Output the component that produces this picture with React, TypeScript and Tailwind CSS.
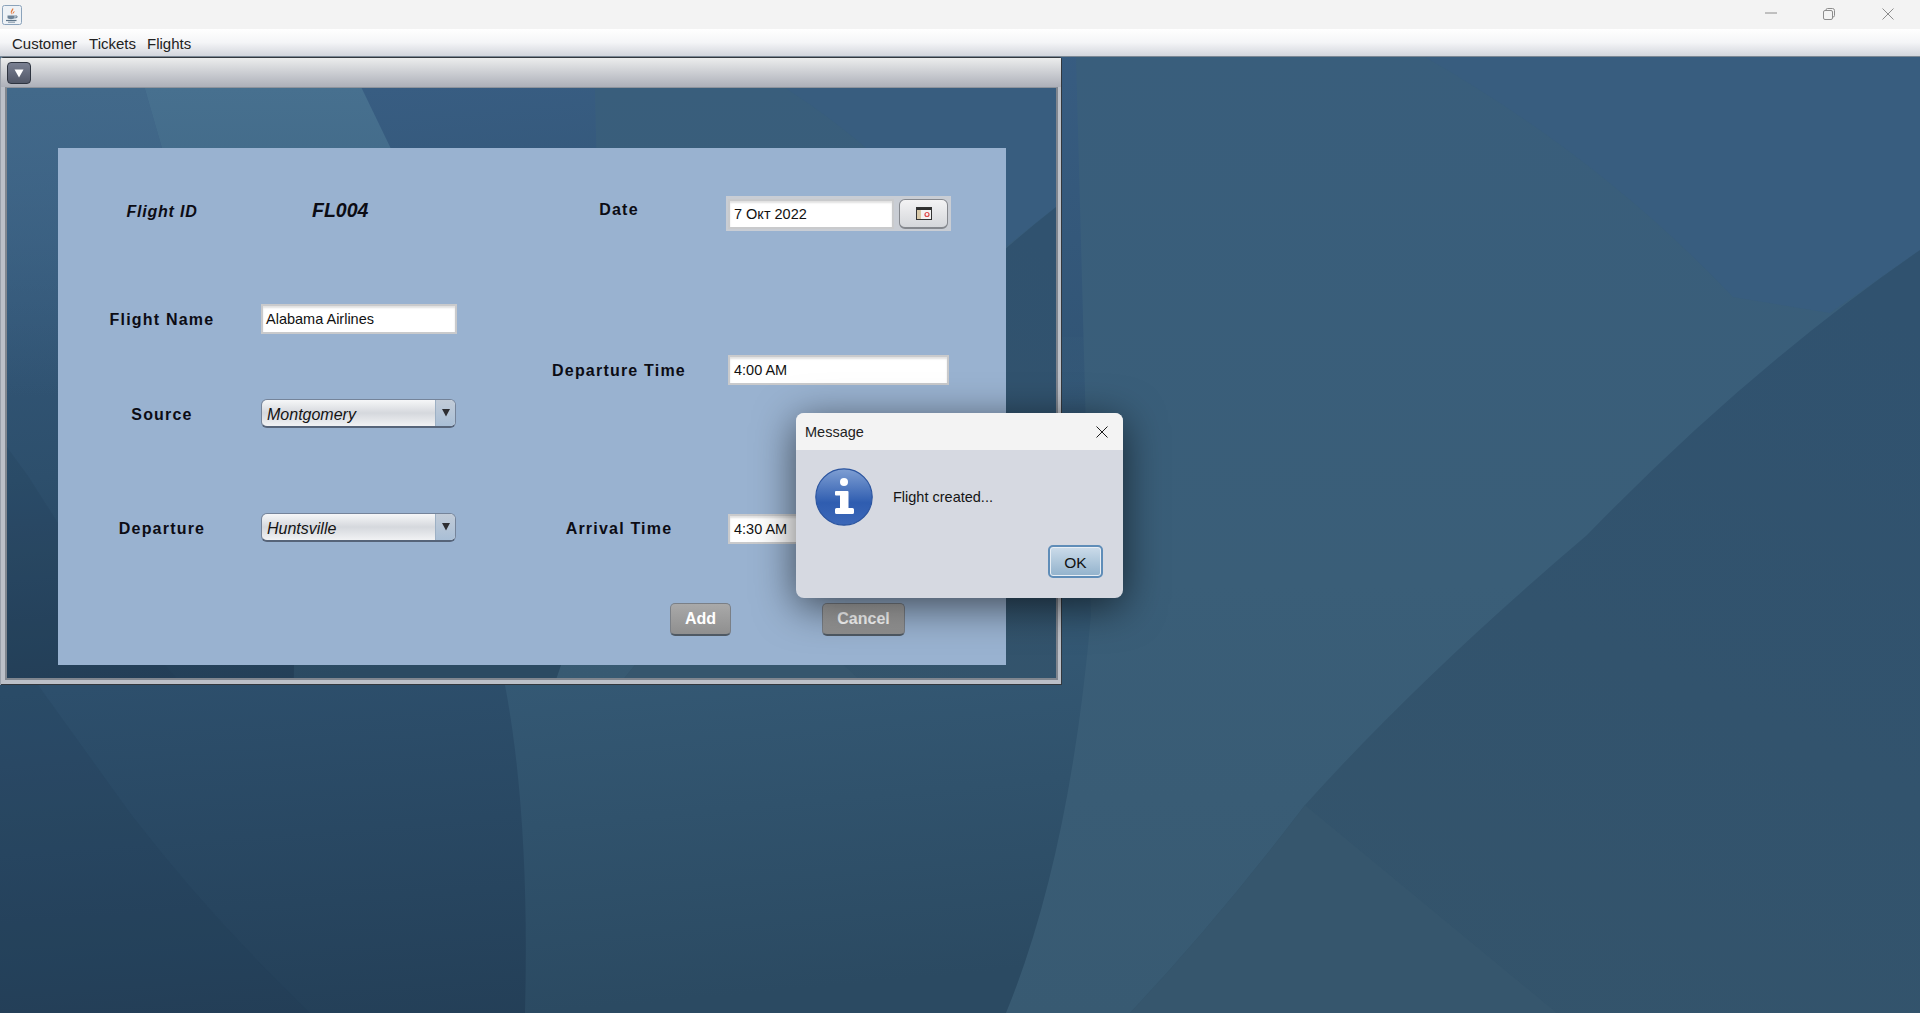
import React from "react";

const Wallpaper: React.FC = () => (
  <svg
    className="absolute inset-0 h-full w-full"
    viewBox="0 0 1920 956"
    preserveAspectRatio="none"
  >
    <defs>
      <linearGradient id="wpBase" x1="0.35" y1="0" x2="0.5" y2="1">
        <stop offset="0" stopColor="#385d82" />
        <stop offset="0.6" stopColor="#2d4f6c" />
        <stop offset="1" stopColor="#233e56" />
      </linearGradient>
      <linearGradient id="wpCenter" x1="0" y1="0" x2="0.1" y2="1">
        <stop offset="0" stopColor="#3a5f7c" stopOpacity="0" />
        <stop offset="0.45" stopColor="#355a76" stopOpacity="1" />
        <stop offset="1" stopColor="#2b4a62" stopOpacity="1" />
      </linearGradient>
      <linearGradient id="wpGreen" x1="0" y1="0" x2="0" y2="1">
        <stop offset="0" stopColor="#395e7c" />
        <stop offset="0.55" stopColor="#3a5e78" />
        <stop offset="1" stopColor="#385a72" />
      </linearGradient>
      <linearGradient id="wpDark" x1="0.8" y1="0" x2="0.3" y2="1">
        <stop offset="0" stopColor="#30526f" />
        <stop offset="1" stopColor="#34546b" />
      </linearGradient>
      <linearGradient id="wpTop" x1="0" y1="0" x2="0" y2="1">
        <stop offset="0" stopColor="#47708f" />
        <stop offset="1" stopColor="#3f6785" />
      </linearGradient>
      <linearGradient id="wpFade" x1="0" y1="0" x2="0" y2="1">
        <stop offset="0" stopColor="#42698a" stopOpacity="1" />
        <stop offset="1" stopColor="#42698a" stopOpacity="0" />
      </linearGradient>
    </defs>
    <rect width="1920" height="956" fill="url(#wpBase)" />
    {/* top left light shapes */}
    <path d="M0 0H252L330 240 340 500H0Z" fill="url(#wpFade)" />
    <path d="M252 0H649L720 130 640 260 330 240Z" fill="url(#wpTop)" />
    {/* lower left wedge */}
    <path
      d="M0 582 38 628 130 756Q210 860 310 956H0Z"
      fill="#203a4e"
      opacity="0.16"
    />
    {/* center column */}
    <path
      d="M470 280H1200V956H525Q530 760 505 628Z"
      fill="url(#wpCenter)"
    />
    {/* large right field */}
    <path
      d="M1076 0H1920V956H1006Q1070 800 1091 558Z"
      fill="url(#wpGreen)"
    />
    {/* blue band top right */}
    <path d="M1425 0H1920V193L1830 256 1733 240Q1600 100 1425 0Z" fill="#385d7f" />
    {/* lower right darker field */}
    <path
      d="M1920 193Q1750 310 1587 478 1420 620 1305 748 1220 860 1130 956H1920Z"
      fill="url(#wpDark)"
    />
    {/* crossing facet */}
    <path d="M1305 748 1557 956H1130Q1220 860 1305 748Z" fill="#36566d" />
  </svg>
);

const JavaIcon: React.FC = () => (
  <svg width="20" height="20" viewBox="0 0 20 20">
    <rect x="0.5" y="0.5" width="19" height="19" rx="2" fill="#eef2f6" stroke="#8ba3bb" />
    <path d="M11 3C12.5 5 8.5 6.5 10 9.5 8 8 8.5 6 11 3Z" fill="#e2763a" />
    <path d="M12.5 6C13 7.5 10.8 8 11 9.5 10 8 11 7 12.5 6Z" fill="#e2763a" />
    <path d="M5.5 10.5H12.5V13C12 14.5 6 14.5 5.5 13Z" fill="#6d8296" />
    <path d="M12.5 11H15V12.5L12.5 13" fill="none" stroke="#6d8296" />
    <path d="M4 15.5H14.5" stroke="#5d7488" strokeWidth="1.2" />
    <path d="M6 17.2H13" stroke="#7e93a6" strokeWidth="1" />
  </svg>
);

const CalendarIcon: React.FC = () => (
  <svg width="16" height="13" viewBox="0 0 16 13">
    <rect x="0.5" y="0.5" width="15" height="12" fill="#f2f2f2" stroke="#333" />
    <rect x="1" y="1" width="14" height="2" fill="#2f2f2f" />
    <rect x="1" y="3" width="4" height="9" fill="#d9c9a8" />
    <circle cx="11" cy="7.5" r="2" fill="none" stroke="#e04848" strokeWidth="1.2" />
  </svg>
);

const InfoIcon: React.FC = () => (
  <svg width="58" height="58" viewBox="0 0 58 58">
    <defs>
      <linearGradient id="infoFill" x1="0" y1="0" x2="0" y2="1">
        <stop offset="0" stopColor="#7f9fd3" />
        <stop offset="0.6" stopColor="#2f5db0" />
        <stop offset="1" stopColor="#3c68b8" />
      </linearGradient>
    </defs>
    <circle cx="29" cy="29" r="28.2" fill="url(#infoFill)" stroke="#2c559f" strokeWidth="1.2" />
    <circle cx="29" cy="14" r="4" fill="#fff" />
    <path
      d="M21 23H32.5Q33.5 23 33.5 24V40H37.5Q39 40 39 41.5V44.5Q39 46 37.5 46H21.5Q20 46 20 44.5V41.5Q20 40 21.5 40H25V27.5H21Q20 27.5 20 26.5V24Q20 23 21 23Z"
      fill="#fff"
    />
  </svg>
);

const Label: React.FC<{ children: React.ReactNode; width?: string }> = ({
  children,
  width = "w-[203px] pl-[5px] pt-[2px] tracking-[1.2px]",
}) => (
  <div
    className={`${width} text-center text-[16px] leading-[24px] font-bold text-[#0c0c14] whitespace-nowrap`}
  >
    {children}
  </div>
);

const TextField: React.FC<{ value: string; width: string; pad?: string }> = ({
  value,
  width,
  pad = "pl-[4px]",
}) => (
  <div
    className={`${width} ${pad} flex h-[30px] items-center border-2 border-[#c9cacc] bg-white pt-[2px] text-[14.5px] text-[#111] shadow-[inset_0_2px_2px_rgba(0,0,0,0.12)]`}
  >
    {value}
  </div>
);

const Combo: React.FC<{ value: string }> = ({ value }) => (
  <div className="flex h-[29px] w-[195px] overflow-hidden rounded-[6px] border border-[#75849a] border-b-[2px] border-b-[#566479] bg-linear-to-b from-[#f6f7f8] via-[#d5d8dd] to-[#f1f2f4]">
    <div className="flex-1 pl-[5px] pt-[1px] text-[16px] leading-[28px] text-[#141414] italic">{value}</div>
    <div className="flex w-[20px] items-center justify-center border-l border-[#9db0c4] bg-linear-to-b from-[#c2ccd8] to-[#a9bfd6] pb-[2px]">
      <svg width="10" height="9" viewBox="0 0 10 9">
        <path d="M1 1H9L5 8.5Z" fill="#2e2e32" />
      </svg>
    </div>
  </div>
);

const ActionButton: React.FC<{ text: string; width: string }> = ({ text, width }) => (
  <button
    className={`${width} h-[33px] rounded-[5px] border border-[#7a7f86] border-b-[2px] border-b-[#4f5963] bg-linear-to-b from-[#a9a9a9] to-[#8f8f8f] text-[16px] font-bold text-white`}
  >
    {text}
  </button>
);

export default function App() {
  return (
    <div className="flex h-screen w-full flex-col overflow-hidden bg-[#2d4f6c] font-['Liberation_Sans',Arial,sans-serif]">
      {/* native title bar */}
      <div className="flex h-[29px] shrink-0 items-center justify-between bg-[#f3f3f3] pl-[2px] pr-[3px]">
        <JavaIcon />
        <div className="flex h-full">
          <div className="flex w-[58px] items-center justify-center pb-[3px] pl-[2px]">
            <svg width="12" height="2" viewBox="0 0 12 2">
              <path d="M0 1H12" stroke="#8c8c8c" strokeWidth="1" />
            </svg>
          </div>
          <div className="flex w-[59px] items-center justify-center pb-[1px]">
            <svg width="12" height="12" viewBox="0 0 12 12" fill="none" stroke="#8c8c8c">
              <rect x="0.5" y="2.5" width="9" height="9" rx="1.5" />
              <path d="M3 2.5V2Q3 0.5 4.5 0.5H9.5Q11.5 0.5 11.5 2.5V7.5Q11.5 9 10 9H9.5" />
            </svg>
          </div>
          <div className="flex w-[59px] items-center justify-center pb-[1px]">
            <svg width="12" height="12" viewBox="0 0 12 12" fill="none" stroke="#8c8c8c">
              <path d="M0.5 0.5L11.5 11.5M11.5 0.5L0.5 11.5" />
            </svg>
          </div>
        </div>
      </div>

      {/* menu bar */}
      <div className="flex h-[28px] shrink-0 items-center border-b border-[#7a8794] bg-linear-to-b from-[#ffffff] via-[#f4f5f7] to-[#d3d6dd] pl-[12px] pt-[3px] text-[15px] text-[#222]">
        <span>Customer</span>
        <span className="ml-[12px]">Tickets</span>
        <span className="ml-[11px]">Flights</span>
      </div>

      {/* desktop */}
      <div className="relative flex-1">
        <Wallpaper />

        {/* internal frame */}
        <div className="absolute left-[1px] top-0 flex h-[628px] w-[1061px] flex-col rounded-t-[3px] border border-l-0 border-[#33383e] bg-linear-to-r from-[#bcc0c8] to-[#bcc0c8] pb-[4px] pl-[4px] pr-[3px] shadow-[-1px_0_0_#9aa0aa]">
          <div className="-ml-[4px] -mr-[3px] flex h-[29px] shrink-0 items-start bg-linear-to-b from-[#eceded] to-[#adb0b9] pl-[6px] pt-[4px]">
            <div className="flex h-[22px] w-[24px] items-center justify-center rounded-[4px] border border-[#2e3440] bg-linear-to-b from-[#7a8092] to-[#525868]">
              <svg width="10" height="9" viewBox="0 0 10 9">
                <path d="M0.5 0.5H9.5L5 8.5Z" fill="#fff" />
              </svg>
            </div>
          </div>
          <div className="relative flex-1 border-[2px] border-t-[1px] border-[#80868f] border-t-[#8d939c]">
            <Wallpaper />

            {/* form panel */}
            <div className="relative ml-[51px] mt-[60px] h-[517px] w-[948px] bg-[#99b2d0] pt-[48px]">
              <div className="flex">
                <div className="w-[482px]">
                  <div className="flex h-[30px] items-center">
                    <Label width="w-[203px] pl-[5px] pt-[1px] italic tracking-[0.8px]">Flight ID</Label>
                    <div className="ml-[51px] pb-[1px] text-[19.5px] font-bold text-[#0c0c14] italic">FL004</div>
                  </div>
                  <div className="mt-[78px] flex items-center">
                    <Label>Flight Name</Label>
                    <TextField value="Alabama Airlines" width="w-[196px]" pad="pl-[3px]" />
                  </div>
                  <div className="mt-[65px] flex items-center">
                    <Label>Source</Label>
                    <Combo value="Montgomery" />
                  </div>
                  <div className="mt-[85px] flex items-center">
                    <Label>Departure</Label>
                    <Combo value="Huntsville" />
                  </div>
                </div>
                <div>
                  <div className="flex items-start">
                    <div className="pt-[2px]">
                      <Label width="w-[158px] tracking-[1.2px]">Date</Label>
                    </div>
                    <div className="ml-[28px] flex h-[35px] w-[225px] items-center gap-[5px] bg-[#c9cdd4] pl-[2px]">
                      <TextField value="7 Окт 2022" width="w-[166px]" />
                      <div className="flex h-[30px] w-[49px] items-center justify-center rounded-[6px] border border-[#85888e] border-b-[2px] bg-linear-to-b from-[#f3f3f4] to-[#d5d7db]">
                        <CalendarIcon />
                      </div>
                    </div>
                  </div>
                  <div className="mt-[124px] flex items-center">
                    <Label width="w-[158px] pt-[1px] tracking-[1.2px]">Departure Time</Label>
                    <div className="ml-[30px]">
                      <TextField value="4:00 AM" width="w-[221px]" />
                    </div>
                  </div>
                  <div className="mt-[129px] flex items-center">
                    <Label width="w-[158px] tracking-[1.2px]">Arrival Time</Label>
                    <div className="ml-[30px]">
                      <TextField value="4:30 AM" width="w-[221px]" />
                    </div>
                  </div>
                </div>
              </div>
              <div className="ml-[612px] mt-[59px] flex gap-[91px]">
                <ActionButton text="Add" width="w-[61px]" />
                <ActionButton text="Cancel" width="w-[83px]" />
              </div>
            </div>
          </div>
        </div>

        {/* message dialog */}
        <div className="absolute left-[796px] top-[356px] flex h-[185px] w-[327px] flex-col overflow-hidden rounded-[8px] bg-[#d6d9e1] shadow-[0_8px_40px_rgba(0,0,0,0.6)]">
          <div className="flex h-[37px] shrink-0 items-center justify-between bg-[#f3f3f3] pl-[9px] pr-[15px] text-[14.5px] text-[#222]">
            <span className="pt-[3px]">Message</span>
            <svg width="12" height="12" viewBox="0 0 12 12" fill="none" stroke="#1a1a1a">
              <path d="M0.5 0.5L11.5 11.5M11.5 0.5L0.5 11.5" />
            </svg>
          </div>
          <div className="flex items-center pl-[19px] pt-[18px]">
            <InfoIcon />
            <span className="ml-[20px] pt-[2px] text-[14.5px] text-[#141414]">Flight created...</span>
          </div>
          <div className="mt-[19px] flex justify-end pr-[20px]">
            <button className="h-[33px] w-[55px] rounded-[5px] border-[2px] border-[#5f8db8] bg-linear-to-b from-[#ccdcea] to-[#92b2cc] pt-[3px] text-[15.5px] text-[#111] shadow-[inset_0_0_0_1px_#e8eef4]">
              OK
            </button>
          </div>
        </div>
      </div>
    </div>
  );
}
